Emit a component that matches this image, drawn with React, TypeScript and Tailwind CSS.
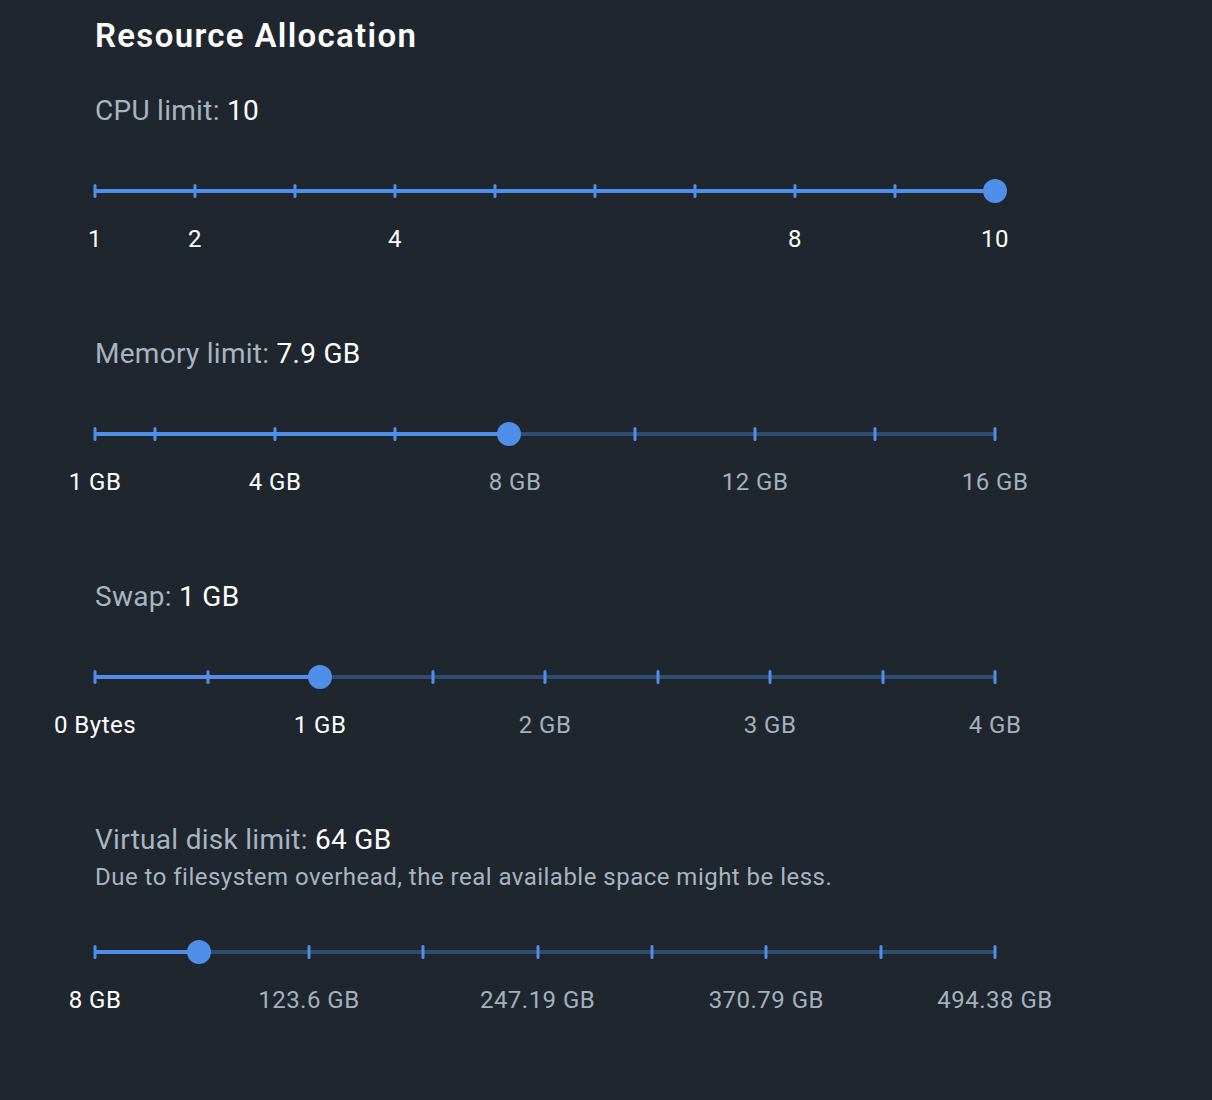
import React from "react";

type Mark = { value: number; label?: string };

type SliderProps = {
  min: number;
  max: number;
  value: number;
  ticks: number[];
  marks: Mark[];
};

const pct = (v: number, min: number, max: number) => ((v - min) / (max - min)) * 100;

function Slider({ min, max, value, ticks, marks }: SliderProps) {
  const p = pct(value, min, max);
  return (
    <div className="w-[900px]">
      {/* rail + ticks + thumb */}
      <div className="relative h-6 w-full">
        <div className="absolute left-0 right-0 top-[10px] h-1 rounded-full bg-[#2f4c72]" />
        <div
          className="absolute left-0 top-[10px] h-1 rounded-full bg-[#4f8fe9]"
          style={{ width: `${p}%` }}
        />
        {ticks.map((t) => (
          <span
            key={t}
            className="absolute top-[5px] h-[14px] w-[3px] -translate-x-1/2 rounded-sm bg-[#4f8fe9]"
            style={{ left: `${pct(t, min, max)}%` }}
          />
        ))}
        <span
          className="absolute top-0 h-6 w-6 -translate-x-1/2 rounded-full bg-[#4f8fe9]"
          style={{ left: `${p}%` }}
        />
      </div>

      {/* mark labels */}
      <div className="relative mt-[22px] h-7 w-full">
        {marks.map((m) => (
          <span
            key={m.value}
            className={
              "absolute top-0 -translate-x-1/2 whitespace-nowrap text-[24px] leading-7 tracking-[0.02em] " +
              (m.value <= value ? "text-white" : "text-[#a3b0be]")
            }
            style={{ left: `${pct(m.value, min, max)}%` }}
          >
            {m.label}
          </span>
        ))}
      </div>
    </div>
  );
}

function Section({
  name,
  value,
  hint,
  children,
}: {
  name: string;
  value: string;
  hint?: string;
  children: React.ReactNode;
}) {
  return (
    <section className="flex flex-col">
      <div className="h-8 text-[28px] leading-8 tracking-[0.01em] text-[#a7b4c2]">
        {name}: <span className="text-white">{value}</span>
      </div>
      {hint ? (
        <>
          <div className="mt-[7px] h-7 text-[24px] leading-7 tracking-[0.02em] text-[#a7b4c2]">
            {hint}
          </div>
          <div className="mt-[49px]">{children}</div>
        </>
      ) : (
        <div className="mt-[52px]">{children}</div>
      )}
    </section>
  );
}

const range = (from: number, to: number, step: number) => {
  const out: number[] = [];
  for (let v = from; v <= to + 1e-9; v += step) out.push(+v.toFixed(4));
  return out;
};

export default function App() {
  // disk: 8 GB minimum, ticks on multiples of 494.38 / 8
  const diskStep = 494.38 / 8;
  const diskTicks = [8, ...range(1, 8, 1).map((k) => k * diskStep)];

  return (
    <div
      className="min-h-[1100px] w-full bg-[#20262d] pl-[95px]"
      style={{ fontFamily: "Roboto, 'Noto Sans', sans-serif" }}
    >
      <h1 className="flex h-[71px] items-center text-[33px] font-semibold tracking-[0.04em] text-white">
        Resource Allocation
      </h1>

      <div className="mt-6 flex flex-col gap-[85px]">
        <Section name="CPU limit" value="10">
          <Slider
            min={1}
            max={10}
            value={10}
            ticks={range(1, 10, 1)}
            marks={[
              { value: 1, label: "1" },
              { value: 2, label: "2" },
              { value: 4, label: "4" },
              { value: 8, label: "8" },
              { value: 10, label: "10" },
            ]}
          />
        </Section>

        <Section name="Memory limit" value="7.9 GB">
          <Slider
            min={1}
            max={16}
            value={7.9}
            ticks={[1, 2, 4, 6, 8, 10, 12, 14, 16]}
            marks={[
              { value: 1, label: "1 GB" },
              { value: 4, label: "4 GB" },
              { value: 8, label: "8 GB" },
              { value: 12, label: "12 GB" },
              { value: 16, label: "16 GB" },
            ]}
          />
        </Section>

        <Section name="Swap" value="1 GB">
          <Slider
            min={0}
            max={4}
            value={1}
            ticks={range(0, 4, 0.5)}
            marks={[
              { value: 0, label: "0 Bytes" },
              { value: 1, label: "1 GB" },
              { value: 2, label: "2 GB" },
              { value: 3, label: "3 GB" },
              { value: 4, label: "4 GB" },
            ]}
          />
        </Section>

        <Section
          name="Virtual disk limit"
          value="64 GB"
          hint="Due to filesystem overhead, the real available space might be less."
        >
          <Slider
            min={8}
            max={494.38}
            value={64}
            ticks={diskTicks}
            marks={[
              { value: 8, label: "8 GB" },
              { value: diskTicks[2], label: "123.6 GB" },
              { value: diskTicks[4], label: "247.19 GB" },
              { value: diskTicks[6], label: "370.79 GB" },
              { value: diskTicks[8], label: "494.38 GB" },
            ]}
          />
        </Section>
      </div>
    </div>
  );
}
